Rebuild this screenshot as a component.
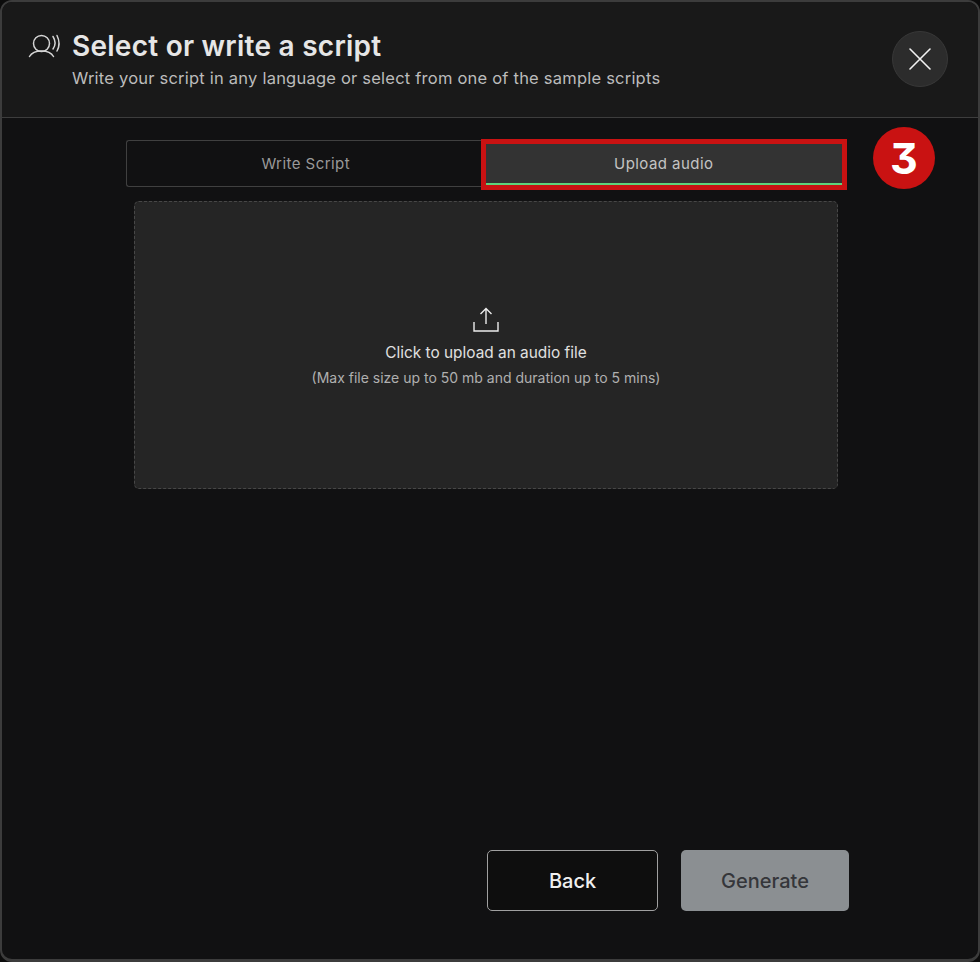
<script>
  let activeTab = 'upload';
</script>

<div class="modal">
  <header class="head">
    <svg class="speak" width="32" height="23" viewBox="0 0 32 23" fill="none" stroke="#d4d4d4" stroke-width="1.5" stroke-linecap="round">
      <circle cx="13.5" cy="8.500" r="8" />
      <path d="M1.500 21.500c2-3.500 6-5.500 12-5.500s10 2 12 5.500" />
      <path d="M25 1.500c2.500 4 2.500 9 0 12.500" />
      <path d="M29 .5c2.500 5 2.500 11 0 15.500" />
    </svg>
    <div class="titles">
      <h1>Select or write a script</h1>
      <p>Write your script in any language or select from one of the sample scripts</p>
    </div>
    <button class="close" aria-label="Close">
      <svg width="22" height="22" viewBox="0 0 22 22" stroke="#f2f2f2" stroke-width="1.6" stroke-linecap="round">
        <path d="M1 1l20 20M21 1L1 21" />
      </svg>
    </button>
  </header>

  <main class="body">
    <div class="tabrow">
      <div class="tabs">
        <button class="tab write" class:active={activeTab === 'write'}>Write Script</button>
        <button class="tab upload" class:active={activeTab === 'upload'}>Upload audio</button>
      </div>
      <span class="badge">3</span>
    </div>

    <div class="drop">
      <svg width="26" height="25" viewBox="0 0 26 25" fill="none" stroke="#ececec" stroke-width="1.4">
        <path d="M13 17V1.500M7.500 7L13 1.500 18.500 7" />
        <path d="M1 15v9h24v-9" />
      </svg>
      <div class="main-line">Click to upload an audio file</div>
      <div class="sub-line">(Max file size up to 50 mb and duration up to 5 mins)</div>
    </div>

    <footer class="foot">
      <button class="btn back">Back</button>
      <button class="btn gen">Generate</button>
    </footer>
  </main>
</div>

<style>
  :global(body) {
    margin: 0;
    background: #0c0c0c;
  }
  .modal {
    box-sizing: border-box;
    width: 980px;
    height: 962px;
    display: flex;
    flex-direction: column;
    border: 2px solid #3c3c3c;
    border-bottom-width: 3px;
    border-radius: 12px;
    background: #111112;
    overflow: hidden;
    font-family: Inter, "Noto Sans", sans-serif;
  }
  .head {
    box-sizing: border-box;
    height: 116px;
    flex: none;
    display: flex;
    align-items: flex-start;
    padding: 28px 30px 0 26px;
    background: #191919;
    border-bottom: 1px solid #3d3d3d;
  }
  .speak {
    flex: none;
    margin: 5px 12px 0 0;
    overflow: visible;
  }
  .titles {
    flex: 1;
  }
  h1 {
    margin: 0;
    font-size: 28px;
    line-height: 33px;
    letter-spacing: 0.25px;
    font-weight: 600;
    color: #e6e6e6;
  }
  p {
    margin: 4px 0 0;
    font-size: 16.5px;
    line-height: 22px;
    letter-spacing: 0.22px;
    color: #bcbcbc;
  }
  .close {
    flex: none;
    width: 56px;
    height: 56px;
    margin-top: 1px;
    padding: 0;
    display: flex;
    align-items: center;
    justify-content: center;
    border-radius: 50%;
    border: 1px solid #383838;
    background: #2c2c2c;
  }
  .body {
    flex: 1;
    display: flex;
    flex-direction: column;
  }
  .tabrow {
    display: flex;
    align-items: center;
    height: 47px;
    margin: 22px 0 0 124px;
  }
  .tabs {
    display: flex;
    align-items: flex-start;
    width: 721px;
    height: 47px;
  }
  .tab {
    box-sizing: border-box;
    font-family: inherit;
    font-size: 15px;
    letter-spacing: 0.45px;
    padding: 0;
    cursor: pointer;
  }
  .write {
    width: 356px;
    height: 47px;
    padding: 0 0 1px 3px;
    background: transparent;
    color: #9a9a9a;
    border: 1px solid #404040;
    border-right: none;
    border-radius: 3px 0 0 3px;
  }
  .upload {
    width: 367px;
    height: 51px;
    margin: -1px 0 0 -1px;
    padding-bottom: 3px;
    background: #333333;
    color: #c4c4c4;
    border: 5px solid #c91212;
    box-shadow: inset 0 -2px 0 #5ed37b;
  }
  .badge {
    flex: none;
    width: 62px;
    height: 62px;
    margin: -11px 0 0 26px;
    display: flex;
    align-items: center;
    justify-content: center;
    border-radius: 50%;
    background: #c91212;
    color: #fff;
    font-family: Inter, sans-serif;
    font-feature-settings: "cv09";
    font-weight: 700;
    font-size: 43px;
  }
  .drop {
    box-sizing: border-box;
    width: 704px;
    height: 288px;
    margin: 14px 0 0 132px;
    display: flex;
    flex-direction: column;
    align-items: center;
    padding-top: 105px;
    background: #252525;
    border: 1px dashed #474747;
    border-radius: 5px;
  }
  .main-line {
    margin-top: 11px;
    font-size: 15.4px;
    line-height: 20px;
    color: #e0e0e0;
  }
  .sub-line {
    margin-top: 6px;
    font-size: 14px;
    line-height: 18px;
    color: #b0b0b0;
  }
  .foot {
    display: flex;
    gap: 23px;
    justify-content: flex-end;
    margin-top: auto;
    padding: 0 129px 48px 0;
  }
  .btn {
    box-sizing: border-box;
    height: 61px;
    font-family: inherit;
    font-size: 20px;
    font-weight: 500;
    border-radius: 5px;
    padding: 0;
  }
  .back {
    width: 171px;
    background: #0e0e0e;
    color: #f0f0f0;
    border: 1.5px solid #a0a0a0;
  }
  .gen {
    width: 168px;
    background: #8b8f92;
    color: #35363a;
    border: none;
  }
</style>
